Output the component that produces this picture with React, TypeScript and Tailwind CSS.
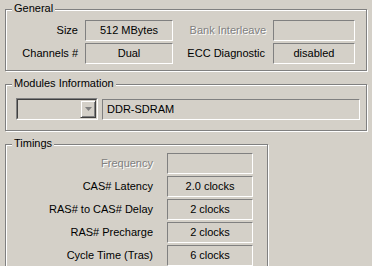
import React from "react";

const font = { fontFamily: '"Liberation Sans", Arial, sans-serif' };

function Group({ title, className, children }: { title: string; className: string; children?: React.ReactNode }) {
  return (
    <div className={`relative border border-[#808080] shadow-[inset_1px_1px_0_#fff,1px_1px_0_#fff] ${className}`}>
      <div className="absolute left-[6px] -top-[8px] bg-[#d4d0c8] px-[2px] leading-[13px] text-black">{title}</div>
      {children}
    </div>
  );
}

function Field({ value, className }: { value?: string; className: string }) {
  return (
    <div
      className={`flex h-[21px] items-center justify-center border-t border-l border-t-[#808080] border-l-[#808080] border-b border-r border-b-white border-r-white leading-[13px] text-black ${className}`}
    >
      {value}
    </div>
  );
}

function Label({ text, disabled, className }: { text: string; disabled?: boolean; className: string }) {
  return (
    <div
      className={`text-right leading-[13px] ${disabled ? "text-[#808080] [text-shadow:1px_1px_0_#fff]" : "text-black"} ${className}`}
    >
      {text}
    </div>
  );
}

export default function App() {
  const timings: [string, string, boolean][] = [
    ["Frequency", "", true],
    ["CAS# Latency", "2.0 clocks", false],
    ["RAS# to CAS# Delay", "2 clocks", false],
    ["RAS# Precharge", "2 clocks", false],
    ["Cycle Time (Tras)", "6 clocks", false],
  ];
  return (
    <div className="h-[266px] w-[372px] overflow-hidden bg-[#d4d0c8] text-[11px]" style={font}>
      <div className="flex flex-col pl-[5px] pt-[9px]">
        <Group title="General" className="h-[62px] w-[362px]">
          <div className="flex flex-col gap-[2px] pt-[10px]">
            <div className="flex items-center">
              <Label text="Size" className="w-[72px]" />
              <Field value="512 MBytes" className="ml-[7px] w-[88px]" />
              <Label text="Bank Interleave" disabled className="w-[93px]" />
              <Field className="ml-[7px] w-[82px]" />
            </div>
            <div className="flex items-center">
              <Label text="Channels #" className="w-[72px]" />
              <Field value="Dual" className="ml-[7px] w-[88px]" />
              <Label text="ECC Diagnostic" className="w-[92px]" />
              <Field value="disabled" className="ml-[8px] w-[82px]" />
            </div>
          </div>
        </Group>
        <Group title="Modules Information" className="mt-[13px] h-[47px] w-[362px]">
          <div className="flex items-start pl-[10px] pt-[13px]">
            <div className="flex h-[22px] w-[82px] border-t border-l border-t-[#808080] border-l-[#808080] border-b border-r border-b-white border-r-white">
              <div className="flex flex-1 border-t border-l border-t-[#404040] border-l-[#404040] border-b border-r border-b-[#d4d0c8] border-r-[#d4d0c8]">
                <div className="flex-1" />
                <div className="flex w-[16px] items-center justify-center border-t border-l border-t-[#d4d0c8] border-l-[#d4d0c8] border-b border-r border-b-[#404040] border-r-[#404040] shadow-[inset_1px_1px_0_#fff,inset_-1px_-1px_0_#808080]">
                  <svg width="7" height="4" viewBox="0 0 7 4">
                    <path d="M0 0h7L3.5 4z" fill="#808080" />
                  </svg>
                </div>
              </div>
            </div>
            <div className="ml-[4px] mt-[1px] flex h-[21px] w-[258px] items-center border-t border-l border-t-[#808080] border-l-[#808080] border-b border-r border-b-white border-r-white pl-[4px] leading-[13px] text-black">
              DDR-SDRAM
            </div>
          </div>
        </Group>
        <Group title="Timings" className="mt-[13px] h-[140px] w-[263px]">
          <div className="flex flex-col gap-[2px] pt-[8px]">
            {timings.map(([l, v, d]) => (
              <div key={l} className="flex items-center">
                <Label text={l} disabled={d} className="w-[147px]" />
                <Field value={v} className="ml-[14px] w-[86px]" />
              </div>
            ))}
          </div>
        </Group>
      </div>
    </div>
  );
}
